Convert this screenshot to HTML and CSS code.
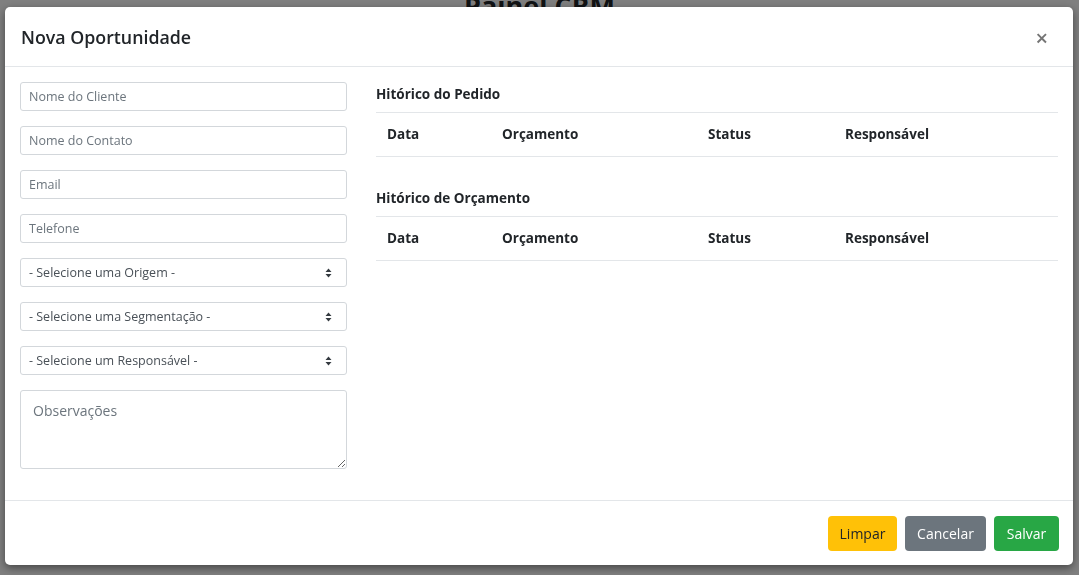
FILE: index.html
```html
<!DOCTYPE html>
<html lang="pt-BR">
<head>
  <meta charset="UTF-8">
  <title>Painel CRM</title>
  <meta name="viewport" content="width=device-width, initial-scale=1.0">
  <link rel="stylesheet" href="styles.css">
</head>
<body>

  <!-- Página por trás do modal -->
  <div class="page">
    <h1 class="page-title">Painel CRM</h1>
  </div>

  <div class="backdrop"></div>

  <!-- Modal -->
  <div class="modal">
    <div class="modal-content">

      <div class="modal-header">
        <h5 class="modal-title">Nova Oportunidade</h5>
        <button class="close" type="button">&times;</button>
      </div>

      <div class="modal-body">
        <form class="form-col">
          <input class="field" type="text" placeholder="Nome do Cliente">
          <input class="field" type="text" placeholder="Nome do Contato">
          <input class="field" type="text" placeholder="Email">
          <input class="field" type="text" placeholder="Telefone">

          <div class="select-wrap">
            <select class="field select">
              <option>- Selecione uma Origem -</option>
            </select>
            <svg class="caret" width="7" height="10" viewBox="0 0 7 10"><path d="M3.5 0.5 L6.5 4 L0.5 4 Z M3.5 9.5 L6.5 6 L0.5 6 Z" fill="#343a40"/></svg>
          </div>
          <div class="select-wrap">
            <select class="field select">
              <option>- Selecione uma Segmentação -</option>
            </select>
            <svg class="caret" width="7" height="10" viewBox="0 0 7 10"><path d="M3.5 0.5 L6.5 4 L0.5 4 Z M3.5 9.5 L6.5 6 L0.5 6 Z" fill="#343a40"/></svg>
          </div>
          <div class="select-wrap">
            <select class="field select">
              <option>- Selecione um Responsável -</option>
            </select>
            <svg class="caret" width="7" height="10" viewBox="0 0 7 10"><path d="M3.5 0.5 L6.5 4 L0.5 4 Z M3.5 9.5 L6.5 6 L0.5 6 Z" fill="#343a40"/></svg>
          </div>

          <textarea class="field notes" placeholder="Observações"></textarea>
        </form>

        <div class="history">
          <h6 class="history-title">Hitórico do Pedido</h6>
          <table class="table">
            <thead>
              <tr>
                <th class="c-data">Data</th>
                <th class="c-orc">Orçamento</th>
                <th class="c-status">Status</th>
                <th>Responsável</th>
              </tr>
            </thead>
            <tbody></tbody>
          </table>

          <h6 class="history-title">Hitórico de Orçamento</h6>
          <table class="table">
            <thead>
              <tr>
                <th class="c-data">Data</th>
                <th class="c-orc">Orçamento</th>
                <th class="c-status">Status</th>
                <th>Responsável</th>
              </tr>
            </thead>
            <tbody></tbody>
          </table>
        </div>
      </div>

      <div class="modal-footer">
        <button class="btn btn-warning" type="button">Limpar</button>
        <button class="btn btn-secondary" type="button">Cancelar</button>
        <button class="btn btn-success" type="button">Salvar</button>
      </div>

    </div>
  </div>

</body>
</html>
```

FILE: styles.css
```css
* { box-sizing: border-box; margin: 0; padding: 0; }

body {
  font-family: 'Open Sans', sans-serif;
  background: #fff;
  color: #212529;
  height: 100vh;
  overflow: hidden;
}

.page {
  text-align: center;
}

.page-title {
  font-size: 27px;
  font-weight: 700;
  line-height: 36px;
  margin-top: -12px;
  color: #212529;
}

.backdrop {
  position: fixed;
  inset: 0;
  background: rgba(0, 0, 0, 0.5);
}

.modal {
  position: fixed;
  top: 7px;
  left: 5px;
  width: 1068px;
}

.modal-content {
  background: #fff;
  border-radius: 5px;
  box-shadow: 0 3px 8px rgba(0, 0, 0, 0.45);
}

.modal-header {
  display: flex;
  align-items: center;
  justify-content: space-between;
  padding: 15px 16px 14px 16px;
  border-bottom: 1px solid #e3e6e9;
}

.modal-title {
  font-size: 17.8px;
  font-weight: 600;
  line-height: 30px;
  color: #212529;
}

.close {
  border: none;
  background: none;
  font-family: 'Open Sans', sans-serif;
  font-size: 22px;
  font-weight: 600;
  line-height: 1;
  color: #757575;
  margin-right: 9px;
  cursor: pointer;
}

.modal-body {
  display: grid;
  grid-template-columns: 327px 1fr;
  column-gap: 29px;
  padding: 15px;
}

.form-col {
  display: flex;
  flex-direction: column;
  gap: 15px;
  padding-bottom: 16px;
}

.field {
  display: block;
  width: 100%;
  height: 29px;
  padding: 0 8px;
  font-family: 'Open Sans', sans-serif;
  font-size: 12.5px;
  color: #495057;
  background: #fff;
  border: 1px solid #d3d7db;
  border-radius: 3px;
  outline: none;
}

.field::placeholder {
  color: #6c757d;
}

.select-wrap {
  position: relative;
}

.select {
  appearance: none;
  -webkit-appearance: none;
  color: #495057;
}

.caret {
  position: absolute;
  right: 15px;
  top: 10px;
}

.notes {
  height: 79px;
  padding: 10px 12px;
  font-size: 14px;
  resize: vertical;
}

.history {
  padding-top: 2px;
}

.history-title {
  font-size: 13.5px;
  font-weight: 700;
  line-height: 21px;
  margin-bottom: 7px;
  color: #212529;
}

.table {
  width: 100%;
  border-collapse: collapse;
  margin-bottom: 31px;
}

.table th {
  text-align: left;
  font-size: 13.5px;
  font-weight: 700;
  line-height: 21px;
  padding: 11px;
  border-top: 1px solid #e3e6e9;
  border-bottom: 1px solid #e3e6e9;
}

.c-data { width: 115px; }
.c-orc { width: 206px; }
.c-status { width: 137px; }

.modal-footer {
  display: flex;
  justify-content: flex-end;
  gap: 8px;
  padding: 15px 14px 14px;
  border-top: 1px solid #e3e6e9;
}

.btn {
  height: 35px;
  padding: 0 10px;
  border: none;
  border-radius: 4px;
  font-family: 'Open Sans', sans-serif;
  font-size: 14px;
  cursor: pointer;
}

.btn-warning {
  background-color: #ffc107;
  color: #212529;
  width: 69px;
}

.btn-secondary {
  background-color: #6c757d;
  color: #fff;
  width: 81px;
}

.btn-success {
  background-color: #28a745;
  color: #fff;
  width: 65px;
}
```
